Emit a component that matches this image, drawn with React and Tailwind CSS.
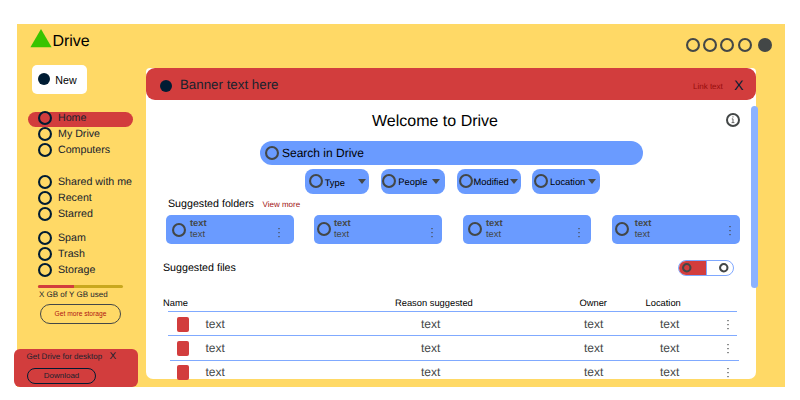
import React from "react";

function Ring({ className = "", size = 14, stroke = 2.1, color = "#434747" }) {
  return (
    <svg className={`shrink-0 ${className}`} width={size} height={size} viewBox={`0 0 ${size} ${size}`}>
      <circle cx={size / 2} cy={size / 2} r={(size - stroke) / 2} fill="none" stroke={color} strokeWidth={stroke} />
    </svg>
  );
}

function Dot({ className = "", size = 12, color = "#001c33" }) {
  return (
    <svg className={`shrink-0 ${className}`} width={size} height={size} viewBox="0 0 12 12">
      <circle cx="6" cy="6" r="6" fill={color} />
    </svg>
  );
}

function Kebab({ className = "" }) {
  return (
    <svg className={`shrink-0 ${className}`} width="2" height="10" viewBox="0 0 2 10" fill="#434747">
      <rect x="0.4" y="0" width="1.2" height="1.2" />
      <rect x="0.4" y="4" width="1.2" height="1.2" />
      <rect x="0.4" y="8" width="1.2" height="1.2" />
    </svg>
  );
}

function NavItem({ label, active }) {
  return (
    <div className="flex h-4 items-start">
      <div className={`ml-[11px] flex h-[15px] w-[105px] items-start rounded-full ${active ? "mt-[2px] bg-[#d23d3d]" : "mt-[2px]"}`}>
        <Ring className="-mt-[0.7px] ml-[9.5px]" color="#001c33" />
        <span className="-mt-[2px] ml-[6.5px] text-[10.67px] leading-4 text-[#17222d]">{label}</span>
      </div>
    </div>
  );
}

function Sidebar() {
  return (
    <aside className="flex w-[129px] shrink-0 flex-col">
      <div className="ml-[13px] mt-[5px] flex h-[24px] items-start">
        <svg className="shrink-0" width="22" height="19" viewBox="0 0 22 19">
          <path d="M11 0 21.6 18.2H.4Z" fill="#38c400" />
        </svg>
        <span className="ml-[0.4px] mt-[4px] text-[16px] leading-[18px] text-black">Drive</span>
      </div>
      <button className="ml-[15px] mt-3 flex h-[29px] w-[55px] items-center rounded-[5px] bg-white">
        <Dot className="ml-[6.3px]" />
        <span className="ml-[5px] pt-[2px] text-[10.67px] leading-4 text-black">New</span>
      </button>
      <nav className="mt-4 flex flex-col">
        <NavItem label="Home" active />
        <NavItem label="My Drive" />
        <NavItem label="Computers" />
        <div className="h-4" />
        <NavItem label="Shared with me" />
        <NavItem label="Recent" />
        <NavItem label="Starred" />
        <div className="h-2" />
        <NavItem label="Spam" />
        <NavItem label="Trash" />
        <NavItem label="Storage" />
      </nav>
      <div className="ml-[21px] mt-[7px] flex h-[3px] w-[85px] rounded-sm bg-[#c9a81e]">
        <div className="w-9 rounded-l-sm bg-[#d23d3d]" />
      </div>
      <span className="ml-[22px] mt-px whitespace-nowrap text-[8px] leading-[12px] text-[#17222d]">X GB of Y GB used</span>
      <button className="ml-[23px] mt-[3px] flex h-5 w-[81px] items-center justify-center whitespace-nowrap rounded-full border border-[#434747] pt-px text-[6.67px] leading-[10px] text-[#b01212]">
        Get more storage
      </button>
      <div className="-ml-[3px] mt-[25px] flex h-[38.5px] w-[124px] shrink-0 flex-col rounded-[6px] bg-[#d23d3d] text-[#17222d]">
        <div className="ml-[12.5px] mt-[2px] flex h-[12px] items-center whitespace-nowrap leading-[12px]">
          <span className="w-[83px] text-[8px]">Get Drive for desktop</span>
          <span className="pt-px text-[10px]">X</span>
        </div>
        <button className="ml-[13px] mt-[5px] flex h-4 w-[69px] items-center justify-center rounded-full border border-[#001c33] text-[8px] leading-[12px]">
          Download
        </button>
      </div>
    </aside>
  );
}

function Chip({ label, width, ring, text, down }) {
  return (
    <div className={`flex h-[24.5px] items-center rounded-lg bg-[#6a9bff] ${width}`}>
      <Ring className={ring} />
      <span className={`text-[9.33px] leading-[14px] text-black ${text} ${down ? "pt-[3px]" : "pt-px"}`}>{label}</span>
      <svg className="shrink-0" width="8" height="5" viewBox="0 0 8 5">
        <path d="M0 0h8L4 5Z" fill="#434747" />
      </svg>
    </div>
  );
}

function FolderCard({ ring, text, kebab }) {
  return (
    <div className="flex h-[29px] w-[128px] items-start rounded-[5px] bg-[#6a9bff]">
      <Ring className={ring} />
      <div className={`mt-[3px] flex w-[16px] flex-col text-[9.33px] leading-[11px] text-[#434747] ${text}`}>
        <span className="font-bold">text</span>
        <span>text</span>
      </div>
      <Kebab className={kebab} />
    </div>
  );
}

function FileRow({ height }) {
  return (
    <div className={`flex items-start text-[12px] leading-[14px] text-[#434747] ${height}`}>
      <div className="ml-[30.5px] mt-[4.5px] h-[15.5px] w-3 shrink-0 rounded-[2px] bg-[#d23d3d]" />
      <span className="ml-[17px] mt-[5px] w-[215.5px]">text</span>
      <span className="mt-[5px] w-[163px]">text</span>
      <span className="mt-[5px] w-[76px]">text</span>
      <span className="mt-[5px] w-[66.5px]">text</span>
      <Kebab className="mt-[8px]" />
    </div>
  );
}

export default function App() {
  return (
    <div className="h-[400px] w-[800px] overflow-hidden bg-white pl-[17px] pt-6 font-['Liberation_Sans',Arial,sans-serif] [text-rendering:geometricPrecision]">
      <div className="flex h-[363px] w-[768px] bg-[#ffd966]">
        <Sidebar />
        <div className="flex w-[639px] flex-col">
          <div className="flex h-[44px] shrink-0 items-start pl-[540.3px] pt-[14.4px]">
            <Ring />
            <Ring className="ml-[3px]" />
            <Ring className="ml-[3px]" />
            <Ring className="ml-1" />
            <Dot className="ml-[6px]" size={14} color="#434747" />
          </div>
          <main className="relative flex h-[311px] w-[610px] shrink-0 flex-col rounded-b-[7px] rounded-t-[4px] bg-white">
            <div className="flex h-8 shrink-0 items-center rounded-[9px] bg-[#d23d3d] text-[#17222d]">
              <Dot className="ml-[13.7px] mt-[3px]" />
              <span className="ml-[8.3px] mt-[2px] w-[513px] text-[13.33px] leading-[18px]">Banner text here</span>
              <span className="mt-[5px] w-[41px] text-[8px] leading-[12px] text-[#960c0c]">Link text</span>
              <span className="mt-[2px] text-[14px] leading-[18px] text-[#001c33]">X</span>
            </div>
            <div className="mt-[9px] flex h-[25px] shrink-0 items-start">
              <h1 className="ml-[226px] mt-[4px] w-[353.5px] text-[16px] leading-[18px] text-black">Welcome to Drive</h1>
              <svg className="mt-[3.5px] shrink-0" width="14" height="14" viewBox="0 0 14 14">
                <circle cx="7" cy="7" r="6" fill="none" stroke="#434747" strokeWidth="2" />
                <path d="M5.8 5.9h1.2V9.5M5.6 9.6h2.8M6.3 3.9h1.3" fill="none" stroke="#666" strokeWidth="1" />
              </svg>
            </div>
            <div className="ml-[113.5px] mt-[6.5px] flex h-[24.5px] w-[383px] shrink-0 items-center rounded-full bg-[#6a9bff]">
              <Ring className="ml-[5.8px]" />
              <span className="ml-[2.7px] pt-px text-[12px] leading-[16px] text-black">Search in Drive</span>
            </div>
            <div className="ml-[159px] mt-1 flex shrink-0 gap-3">
              <Chip label="Type" width="w-[64px]" ring="ml-[3.7px]" text="ml-[2px] w-[33.3px]" down />
              <Chip label="People" width="w-[64px]" ring="ml-[1.3px]" text="ml-[2px] w-[34px]" />
              <Chip label="Modified" width="w-[64px]" ring="ml-[1.5px]" text="ml-[1px] w-[36.5px]" />
              <Chip label="Location" width="w-[68px] -ml-px" ring="ml-[1.5px]" text="ml-[2.5px] w-[38px]" />
            </div>
            <div className="ml-[22px] mt-[2.5px] flex h-4 shrink-0 items-center">
              <h2 className="w-[94.5px] whitespace-nowrap text-[10.67px] leading-4 text-black">Suggested folders</h2>
              <a className="pt-px text-[8px] leading-[12px] text-[#a01010]">View more</a>
            </div>
            <div className="ml-[19.5px] mt-[3px] flex shrink-0 gap-[20.8px]">
              <FolderCard ring="ml-[6.8px] mt-[7.5px]" text="ml-[3.7px]" kebab="ml-[71.7px] mt-[13px]" />
              <FolderCard ring="ml-[3.2px] mt-[6.5px]" text="ml-[2.5px]" kebab="ml-[81.5px] mt-[13px]" />
              <FolderCard ring="ml-[5.4px] mt-[7.3px]" text="ml-[3.5px]" kebab="ml-[76px] mt-[13px]" />
              <FolderCard ring="ml-[3.6px] mt-[6.5px]" text="ml-[5.3px]" kebab="ml-[78.5px] mt-[11px]" />
            </div>
            <div className="ml-[17px] mt-4 flex h-4 shrink-0 items-center">
              <h2 className="w-[515px] text-[10.67px] leading-4 text-black">Suggested files</h2>
              <div className="flex h-4 w-[56px] overflow-hidden rounded-full border border-[#7fa8ff]">
                <div className="flex w-[27.5px] items-center border-r border-[#7fa8ff] bg-[#d23d3d]">
                  <Ring className="ml-[3px]" size={9.5} />
                </div>
                <div className="flex items-center">
                  <Ring className="ml-[12.5px]" size={9.5} />
                </div>
              </div>
            </div>
            <div className="ml-[17px] mt-[19px] flex h-4 shrink-0 items-start whitespace-nowrap text-[9.33px] leading-4 text-black">
              <span className="w-[232px]">Name</span>
              <span className="w-[184.5px]">Reason suggested</span>
              <span className="w-[66px]">Owner</span>
              <span>Location</span>
            </div>
            <div className="ml-[21.5px] h-px w-[569px] shrink-0 bg-[#80aaff]" />
            <FileRow height="h-[23px]" />
            <div className="ml-[21.5px] h-px w-[569px] shrink-0 bg-[#80aaff]" />
            <FileRow height="h-[24px]" />
            <div className="ml-[23.5px] h-px w-[569px] shrink-0 bg-[#80aaff]" />
            <FileRow height="h-[18px] -mt-px" />
            {/* Scrollbar thumb overlapping the panel's right edge */}
            <div className="absolute -right-[2px] top-[38px] h-[182px] w-[7.5px] rounded-full bg-[#8cb2ff]" />
          </main>
        </div>
      </div>
    </div>
  );
}
